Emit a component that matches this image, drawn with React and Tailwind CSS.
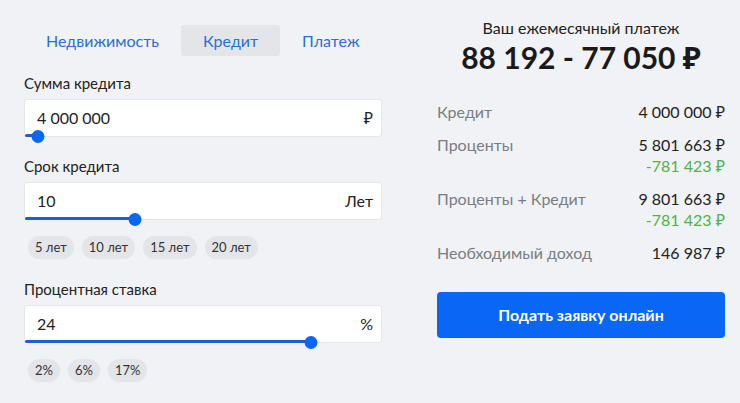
const font = { fontFamily: "Lato, 'Noto Sans', sans-serif" };

function Field({ label, value, unit, fill, chips }) {
  return (
    <div>
      <div className="text-[15px] leading-[18px] text-[#222]">{label}</div>
      <div className="relative mt-[7px] flex h-[38px] items-center justify-between rounded-[3px] border border-[#e4e6ea] bg-white pr-[8px] pl-[12px] text-[16px] text-[#222]">
        <span>{value}</span>
        <span>{unit}</span>
        <div className="absolute -bottom-px left-0 h-[3px] rounded-full bg-[#1a5fd6]" style={{ width: fill }} />
        <div
          className="absolute -bottom-[7px] h-[13px] w-[13px] -translate-x-1/2 rounded-full bg-[#0a66f5]"
          style={{ left: fill }}
        />
      </div>
      {chips && (
        <div className="mt-[16px] flex gap-[8px] pl-[4px]">
          {chips.map((c) => (
            <span key={c} className="rounded-full bg-[#e3e5e9] px-[7px] py-[3px] text-[13px] leading-[17px] text-[#333]">
              {c}
            </span>
          ))}
        </div>
      )}
    </div>
  );
}

function Row({ label, value, saving }) {
  return (
    <div className="flex justify-between text-[16px] leading-[20px]">
      <span className="text-[#7a7d82]">{label}</span>
      <div className="text-right">
        <div className="text-[#222]">{value}</div>
        {saving && <div className="mt-px text-[#4cb34a]">{saving}</div>}
      </div>
    </div>
  );
}

export default function App() {
  return (
    <div className="flex h-[403px] w-[740px] gap-[55px] bg-[#f0f2f5] pt-[25px] pl-[24px]" style={font}>
      <div className="w-[358px]">
        <div className="flex text-[16px] text-[#2a6fd6]">
          <button className="h-[31px] px-[22px]">Недвижимость</button>
          <button className="h-[31px] rounded-[3px] bg-[#e3e5e9] px-[22px]">Кредит</button>
          <button className="h-[31px] px-[22px]">Платеж</button>
        </div>
        <div className="mt-[18px]">
          <Field label="Сумма кредита" value="4 000 000" unit="₽" fill={13} />
        </div>
        <div className="mt-[20px]">
          <Field label="Срок кредита" value="10" unit="Лет" fill={110} chips={["5 лет", "10 лет", "15 лет", "20 лет"]} />
        </div>
        <div className="mt-[21px]">
          <Field label="Процентная ставка" value="24" unit="%" fill={286} chips={["2%", "6%", "17%"]} />
        </div>
      </div>

      <div className="-mt-[7px] w-[288px]">
        <div className="text-center text-[16px] leading-[20px] text-[#222]">Ваш ежемесячный платеж</div>
        <div className="text-center text-[30px] leading-[38px] font-bold text-[#1a1a1a]">88 192 - 77 050 ₽</div>
        <div className="mt-[26px] flex flex-col gap-[13px]">
          <Row label="Кредит" value="4 000 000 ₽" />
          <Row label="Проценты" value="5 801 663 ₽" saving="-781 423 ₽" />
          <Row label="Проценты + Кредит" value="9 801 663 ₽" saving="-781 423 ₽" />
          <Row label="Необходимый доход" value="146 987 ₽" />
        </div>
        <button className="mt-[29px] h-[46px] w-full rounded-[4px] bg-[#0a66f5] text-[16px] font-bold text-white">
          Подать заявку онлайн
        </button>
      </div>
    </div>
  );
}
